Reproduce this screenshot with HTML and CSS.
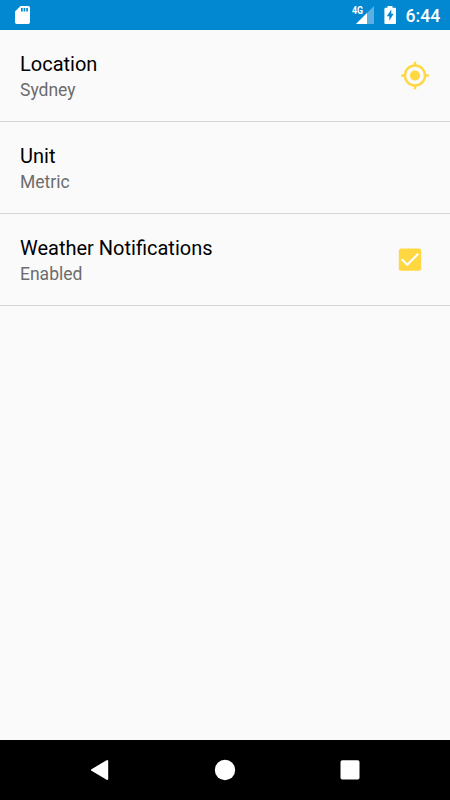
FILE: index.html
```html
<!DOCTYPE html>
<html lang="en">
<head>
<meta charset="utf-8">
<title>Settings</title>
<link rel="stylesheet" href="styles.css">
</head>
<body>
<div class="screen">
  <header class="status">
    <svg class="sd" width="16" height="20" viewBox="0 0 16 20"><path fill="#fff" fill-rule="evenodd" d="M5.500 1h7.700a1.800 1.800 0 0 1 1.800 1.800v14.400a1.800 1.800 0 0 1-1.800 1.800h-11.400a1.800 1.800 0 0 1-1.800-1.800v-10.700zM6 3v3.500h1.700v-3.500zM8.600 3v3.500h1.700v-3.500zM11.200 3v3.500h1.700v-3.500z"/></svg>
    <div class="signal">
      <span class="network">4G</span>
      <svg width="18" height="18" viewBox="0 0 18 18"><path fill="#fff" fill-opacity=".35" d="M18 0v18H0z"/><path fill="#fff" d="M11 7v11H0z"/></svg>
    </div>
    <svg class="battery" width="12" height="18" viewBox="0 0 12 18"><path fill="#fff" fill-rule="evenodd" d="M3.500 0h5v1.800h2.500q1 0 1 1v14.200q0 1-1 1H1.400q-1 0-1-1V2.800q0-1 1-1h2.100zM7.300 3.500L2.800 10.200H5.300V14.800L9.600 7.800H7.300z"/></svg>
    <time class="clock">6:44</time>
  </header>
  <main class="settings">
    <section class="row">
      <div class="label"><h2>Location</h2><p>Sydney</p></div>
      <svg class="locate" width="30" height="30" viewBox="0 0.4 24 24"><path fill="#ffd740" d="M12 8c-2.210 0-4 1.790-4 4s1.790 4 4 4 4-1.790 4-4-1.790-4-4-4zm8.940 3c-.46-4.170-3.770-7.480-7.940-7.940V1h-2v2.060C6.830 3.520 3.520 6.830 3.060 11H1v2h2.060c.46 4.170 3.770 7.480 7.940 7.940V23h2v-2.060c4.170-.46 7.480-3.770 7.940-7.940H23v-2h-2.060zM12 19c-3.870 0-7-3.130-7-7s3.130-7 7-7 7 3.130 7 7-3.130 7-7 7z"/></svg>
    </section>
    <section class="row">
      <div class="label"><h2>Unit</h2><p>Metric</p></div>
    </section>
    <section class="row">
      <div class="label"><h2>Weather Notifications</h2><p>Enabled</p></div>
      <svg class="check" width="24" height="24" viewBox="0 0 24 24"><rect x=".8" y=".4" width="22.400" height="22.400" rx="2.500" fill="#ffd740"/><path fill="none" stroke="#fff" stroke-width="2.100" d="M3.700 11.300l5.500 5.500L20.300 5.700"/></svg>
    </section>
  </main>
  <nav class="nav">
    <svg width="22" height="22" viewBox="0 0 22 22"><path fill="#fff" stroke="#fff" stroke-width="2" stroke-linejoin="round" d="M3 11L18.200 2v18z"/></svg>
    <svg width="22" height="22" viewBox="0 0 22 22"><circle cx="11" cy="11" r="10.200" fill="#fff"/></svg>
    <svg width="22" height="22" viewBox="0 0 22 22"><rect x="1.500" y="1.300" width="19" height="19.200" rx="1.800" fill="#fff"/></svg>
  </nav>
</div>
</body>
</html>
```
FILE: styles.css
```css
body { margin: 0; font-family: Roboto, sans-serif; }
svg { display: block; }
.screen { width: 450px; height: 800px; display: flex; flex-direction: column; background: #fafafa; }
.status { height: 30px; box-sizing: border-box; display: flex; align-items: center; padding: 0 10px 0 15px; background: #0288d1; color: #fff; }
.signal { display: flex; margin-left: auto; }
.network { width: 12px; font-size: 10.500px; line-height: 10px; font-weight: 700; margin-right: -8px; transform: scaleX(.84); transform-origin: left; }
.battery { margin-left: 10px; }
.clock { width: 34.500px; margin-left: 9.500px; padding-top: 2px; font-size: 17.600px; line-height: 30px; font-weight: 500; }
.settings { flex: 1; }
.row { height: 92px; box-sizing: border-box; display: flex; align-items: center; justify-content: space-between; padding: 0 20px; border-bottom: 1px solid #d6d6d6; }
.label { padding-top: 3px; }
.label h2 { margin: 0; font-size: 20px; line-height: 26px; font-weight: 400; color: #000; }
.label p { margin: 0; font-size: 17.500px; line-height: 26px; color: #6c6c6c; }
.check { margin-right: 8px; }
.nav { height: 60px; display: flex; align-items: center; justify-content: center; gap: 103px; background: #000; }
```
